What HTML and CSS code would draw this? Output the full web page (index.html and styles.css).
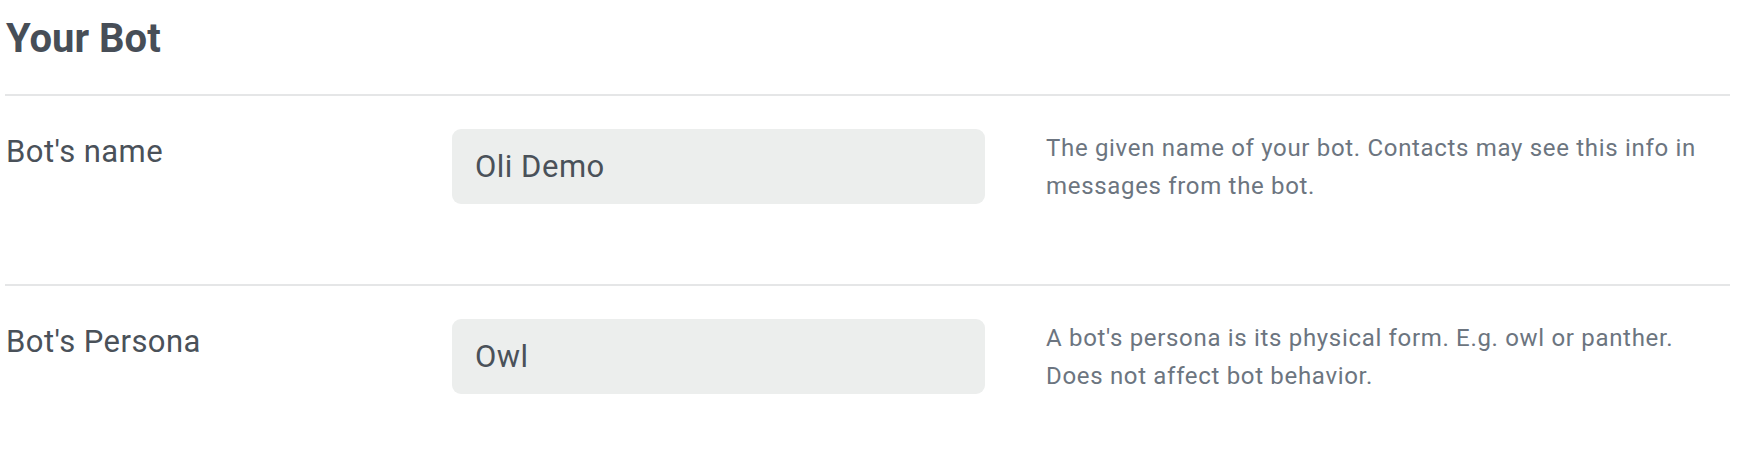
FILE: index.html
```html
<!DOCTYPE html>
<html lang="en">
<head>
<meta charset="utf-8">
<title>Your Bot</title>
<link rel="stylesheet" href="styles.css">
</head>
<body>
<section class="panel">
  <h1 class="panel-title">Your Bot</h1>
  <div class="field-row">
    <label class="field-label" for="bot-name">Bot's name</label>
    <input class="field-input" id="bot-name" type="text" value="Oli Demo">
    <p class="field-help">The given name of your bot. Contacts may see this info in messages from the bot.</p>
  </div>
  <div class="field-row">
    <label class="field-label" for="bot-persona">Bot's Persona</label>
    <input class="field-input" id="bot-persona" type="text" value="Owl">
    <p class="field-help">A bot's persona is its physical form. E.g. owl or panther. Does not affect bot behavior.</p>
  </div>
</section>
</body>
</html>
```

FILE: styles.css
```css
html, body {
  margin: 0;
  padding: 0;
  background: #ffffff;
}

body {
  font-family: Roboto, "Liberation Sans", Arial, sans-serif;
  color: #495057;
}

.panel {
  padding: 15px 12px 0 5px;
}

.panel-title {
  margin: 0;
  font-size: 40px;
  line-height: 48px;
  font-weight: 700;
  color: #474e57;
  padding-left: 1px;
}

.field-row {
  display: grid;
  grid-template-columns: 383px 533px 1fr;
  column-gap: 62px;
  align-items: start;
  border-top: 2px solid #e5e6e7;
  padding: 33px 0 79px 1px;
}

.panel-title + .field-row {
  margin-top: 31px;
}

.field-label {
  font-size: 31px;
  line-height: 46px;
  letter-spacing: 0.45px;
  color: #4a5159;
}

.field-input {
  box-sizing: border-box;
  width: 533px;
  height: 75px;
  margin: 0 0 0 1px;
  padding: 0 23px;
  border: none;
  border-radius: 9px;
  background: #eceeed;
  font-family: Roboto, "Liberation Sans", Arial, sans-serif;
  font-size: 31px;
  letter-spacing: 0.5px;
  color: #4a5159;
  outline: none;
}

.field-help {
  margin: 0;
  font-size: 24px;
  line-height: 38px;
  letter-spacing: 0.68px;
  color: #6c7580;
}
```
